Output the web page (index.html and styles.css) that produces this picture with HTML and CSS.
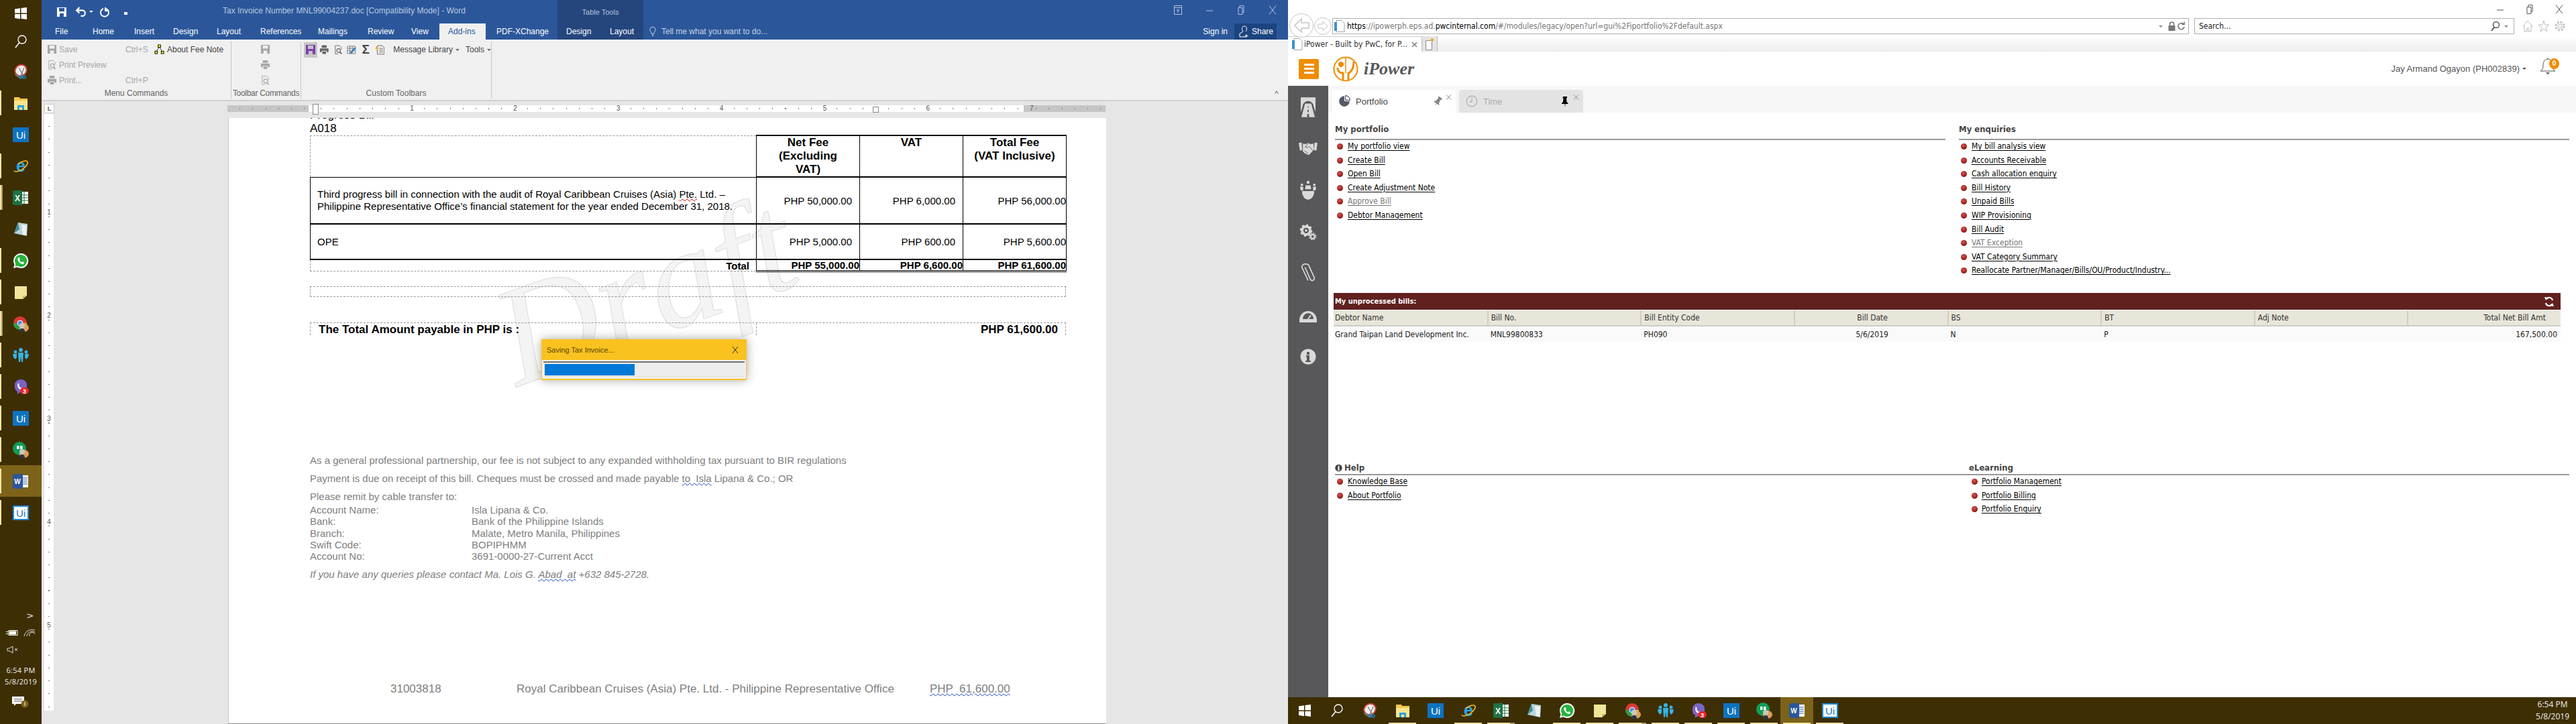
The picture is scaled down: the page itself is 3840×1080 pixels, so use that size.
FILE: index.html
```html
<!DOCTYPE html>
<html lang="en">
<head>
  <meta charset="UTF-8" />
  <title>Tax Invoice and iPower</title>
  <link rel="stylesheet" href="styles.css">
</head>
<body>

  <!-- === Icon sprite === -->
  <svg class="sprite" xmlns="http://www.w3.org/2000/svg">
    <symbol id="i-win" viewBox="0 0 24 24"><path fill="#fff" d="M3 5.500l8-1.200v7.200H3zM12.500 4.100L21 3v8.500h-8.500zM3 13h8v7.200l-8-1.200zM12.500 13H21v8l-8.500-1.200z"/></symbol>
    <symbol id="i-search" viewBox="0 0 24 24"><circle cx="14" cy="9" r="6" fill="none" stroke="#fff" stroke-width="1.300"/><path d="M10 13.500L4 21" stroke="#fff" stroke-width="1.600"/></symbol>
    <symbol id="i-snip" viewBox="0 0 24 24"><ellipse cx="12" cy="10" rx="9" ry="8" transform="rotate(-35 12 10)" fill="#eee" stroke="#c8403c" stroke-width="2"/><path d="M4 15c3 4 6 5 9 4" fill="none" stroke="#8a6a5a" stroke-width="3"/><path d="M9 6l7 12M17 6l-5 12" stroke="#555" stroke-width="1"/><circle cx="17" cy="20" r="2" fill="none" stroke="#1e88c8" stroke-width="1.500"/><circle cx="12" cy="20" r="2" fill="none" stroke="#1e88c8" stroke-width="1.500"/></symbol>
    <symbol id="i-explorer" viewBox="0 0 24 24"><path fill="#f4c74c" d="M2 3h8l1 2h11v17H2z"/><path fill="#fbe58e" d="M2 8h20v14H2z"/><path fill="#2aa3e0" d="M7 22v-7h10v7h-3v-4h-4v4z"/></symbol>
    <symbol id="i-ui" viewBox="0 0 24 24"><rect x="0" y="1" width="24" height="22" fill="#0d73c0"/></symbol>
    <symbol id="i-uio" viewBox="0 0 24 24"><rect x="1" y="2" width="22" height="20" fill="#fff" stroke="#1b87d6" stroke-width="2"/></symbol>
    <symbol id="i-ie" viewBox="0 0 24 24"><ellipse cx="12" cy="12" rx="12" ry="5" transform="rotate(-35 12 12)" fill="none" stroke="#f0c020" stroke-width="1.600" stroke-dasharray="28 12"/></symbol>
    <symbol id="i-excel" viewBox="0 0 24 24"><path fill="#fff" d="M11 3h12v18H11z"/><path stroke="#1f7245" d="M11 8h12M11 12h12M11 16h12M17 3v18"/><path fill="#1f7245" d="M0 1.500l14-1v23l-14-1z"/></symbol>
    <symbol id="i-crystal" viewBox="0 0 24 24"><path fill="#b9d4d8" d="M8 2l14 2-1 18L2 18z"/><path fill="#3f8ea0" d="M8 2l-6 16 8-6z"/><path fill="#e9f2f2" d="M13 5l8 1-1 15-5-1z"/></symbol>
    <symbol id="i-wa" viewBox="0 0 24 24"><path fill="#fff" d="M12 1a11 11 0 0 0-9.500 16.500L1 23l5.700-1.500A11 11 0 1 0 12 1z"/><path fill="#27b33f" d="M12 3a9 9 0 0 0-7.600 13.800L3.500 20.500l3.700-1A9 9 0 1 0 12 3z"/><path fill="#fff" d="M8.500 7c-1 .6-1.500 2-1 3.500 1 3 3.500 5.500 6 6.300 1.700.5 3-.3 3.500-1.500l-.3-1-2.200-1-1 1c-1.500-.5-3-2-3.600-3.500l1-1L9.600 7z"/></symbol>
    <symbol id="i-sticky" viewBox="0 0 24 24"><path fill="#f1e59a" d="M3 3h18v14l-6 5H3z"/><path fill="#c9bd6c" d="M21 17h-6v5z"/></symbol>
    <symbol id="i-chrome" viewBox="0 0 24 24"><circle cx="11" cy="11" r="10" fill="#d93a33"/><path fill="#2a9c4d" d="M1 11a10 10 0 0 0 12 9.800l-4-9z"/><path fill="#f1c030" d="M11 11h10a10 10 0 0 1-6 9z"/><circle cx="11" cy="11" r="4" fill="#4a8de8" stroke="#fff"/><use href="#i-user"/></symbol>
    <symbol id="i-user" viewBox="0 0 24 24"><ellipse cx="17" cy="18" rx="7" ry="6" fill="#d9a25a"/><circle cx="14" cy="15" r="4" fill="#cfc7bc"/><path fill="#2a3550" d="M10 24c0-4 2-5 4-5s4 1 4 5z"/></symbol>
    <symbol id="i-people" viewBox="0 0 24 24"><g fill="#36b4e6"><circle cx="12" cy="4" r="3"/><path d="M8 8h8l-1 14h-2l-1-8-1 8H9z"/><circle cx="4" cy="7" r="2.500"/><path d="M0 10h6v5l-2 3-3-3z"/><circle cx="20" cy="7" r="2.500"/><path d="M18 10h6l-1 5-3 3-2-3z"/></g></symbol>
    <symbol id="i-viber" viewBox="0 0 24 24"><path fill="#7b63c4" d="M3 9a9 8 0 0 1 18 0v4a9 8 0 0 1-10 7l-4 3v-4a8 8 0 0 1-4-6z"/><path fill="#fff" d="M8 6l2 3-1 1 3 4 1-1 3 2c-1 2-3 2-5 1-3-2-5-5-3-10z"/><rect x="11" y="13" width="13" height="10" rx="5" fill="#e8262a"/></symbol>
    <symbol id="i-hang" viewBox="0 0 24 24"><circle cx="10" cy="10" r="10" fill="#109d58"/><path fill="#fff" d="M6 6h3.500v5H6zM11 6h3.500v5H11z"/><use href="#i-user"/></symbol>
    <symbol id="i-word" viewBox="0 0 24 24"><path fill="#fff" d="M11 3h12v18H11z"/><path stroke="#2b579a" d="M13 7h9M13 10h9M13 13h9M13 16h9"/><path fill="#2b579a" d="M0 1.500l15-1v23l-15-1z"/></symbol>
    <symbol id="i-floppy" viewBox="0 0 16 16"><path fill="currentColor" fill-rule="evenodd" d="M1 1h14v14H1zM4 2v5h8V2zM5 10v5h6v-5z"/></symbol>
    <symbol id="i-print" viewBox="0 0 16 16"><path fill="currentColor" d="M4 1h8v4H4zM1 6h14v6h-3v-2H4v2H1zM5 11h6v4H5z"/></symbol>
    <symbol id="i-preview" viewBox="0 0 16 16"><path fill="none" stroke="currentColor" d="M3 1.500h7l3 3V8M3 1.500V15h5"/><circle cx="8.500" cy="9.500" r="3" fill="none" stroke="currentColor" stroke-width="1.300"/><path d="M10.500 12l3 3" stroke="currentColor" stroke-width="2"/></symbol>
    <symbol id="i-org" viewBox="0 0 16 16"><path stroke="#333" fill="none" d="M8 4L3 12M8 4l5 8"/><rect x="6" y="1" width="4" height="4" fill="#ff0" stroke="#000"/><rect x="1" y="11" width="4" height="4" fill="#ff0" stroke="#000"/><rect x="11" y="11" width="4" height="4" fill="#ff0" stroke="#000"/></symbol>
    <symbol id="i-clockpie" viewBox="0 0 16 16"><path fill="currentColor" d="M8 1a7 7 0 1 0 7 7H8z"/><path fill="none" stroke="currentColor" d="M9.500 .500a6 6 0 0 1 6 6h-6z"/></symbol>
    <symbol id="i-pin" viewBox="0 0 16 16"><path fill="currentColor" d="M5 0h6v2l-1 1 .5 5 2 2v1H3v-1l2-2 .5-5-1-1zM7.500 11h1L8 16z"/></symbol>
    <symbol id="i-tunnel" viewBox="0 0 24 32"><path fill="#d9d9d9" d="M0 0h24v24l-3-9a9 9 0 0 0-18 0L0 24z"/><path fill="#d9d9d9" d="M7 10h10l6 22H1zM11.500 14v3h1v-3zM11 20v4h2v-4zM10.500 27v5h3v-5z"/></symbol>
    <symbol id="i-hands" viewBox="0 0 32 24"><path fill="#d9d9d9" d="M0 2l5-1 1 13-4 1zM32 2l-5-1-1 13 4 1zM7 3l5 1 4-2 4 2 5-1 1 10-8 9c-2 1-3 0-3-1-2 1-3 0-3-1-2 0-3-1-3-2-1 0-2-1-2-2z"/><path stroke="#58585a" fill="none" d="M16 3l-5 6 4 1 3-2 6 7M13 17l3 3M10 15l3 3"/></symbol>
    <symbol id="i-group" viewBox="0 0 26 32"><g fill="#d9d9d9"><circle cx="13" cy="3" r="2.500"/><circle cx="3" cy="7" r="2"/><circle cx="23" cy="7" r="2"/><path d="M9 8h8l1 6h-10zM0 10h5v6H1zM21 10h5l-1 6h-4z"/><path d="M3 17h20a10 14 0 0 1-20 0z"/></g></symbol>
    <symbol id="i-gears" viewBox="0 0 32 32"><circle cx="12" cy="13" r="8" fill="none" stroke="#d9d9d9" stroke-width="5" /><circle cx="12" cy="13" r="2.500" fill="#d9d9d9"/><circle cx="12" cy="13" r="11" fill="none" stroke="#d9d9d9" stroke-width="3" stroke-dasharray="4 4.600"/><circle cx="25" cy="25" r="4" fill="#58585a" stroke="#d9d9d9" stroke-width="3"/><circle cx="25" cy="25" r="6.500" fill="none" stroke="#d9d9d9" stroke-width="2" stroke-dasharray="3 2.100"/></symbol>
    <symbol id="i-clip" viewBox="0 0 24 32"><path fill="none" stroke="#d9d9d9" stroke-width="1.800" d="M7 6l9 20a3.500 3.500 0 0 0 6-3L13 3C11 0 5 0 3 3c-1 2-1 4 0 5l9 19"/></symbol>
    <symbol id="i-dome" viewBox="0 0 28 24"><path fill="#d9d9d9" d="M1 20a13 14 0 0 1 26 0v3H1z"/><path fill="#58585a" d="M6 18a8 9 0 0 1 16 0z"/><path stroke="#d9d9d9" stroke-width="2" d="M14 18l4-6"/></symbol>
    <symbol id="i-info" viewBox="0 0 24 24"><circle cx="12" cy="12" r="11.500" fill="#d9d9d9"/><path fill="#58585a" d="M10 5h4v4h-4zM9 10h5v8h2v2H8v-2h2v-6H9z"/></symbol>
    <symbol id="i-logo" viewBox="0 0 38 38"><circle cx="19" cy="19" r="17.500" fill="none" stroke="#f08c00" stroke-width="2"/><circle cx="12" cy="12" r="4" fill="#f08c00"/><path fill="none" stroke="#f08c00" stroke-width="3" d="M7 17c0 6 4 8 8 8v11M31 8c0 10-4 16-8 17v11"/><path fill="none" stroke="#f08c00" stroke-width="1.500" d="M19 1v24"/></symbol>
  </svg>

  <div class="screen">

    <!-- === Left taskbar === -->
    <aside class="vbar">
      <div class="vitem vstart"><svg class="tb-ico"><use href="#i-win"/></svg></div>
      <div class="vitem vsearch"><svg class="tb-ico"><use href="#i-search"/></svg></div>
      <div class="vitem"><svg class="tb-ico"><use href="#i-snip"/></svg></div>
      <div class="vitem on"><svg class="tb-ico"><use href="#i-explorer"/></svg></div>
      <div class="vitem"><svg class="tb-ico" viewBox="0 0 24 24"><use href="#i-ui"/><text class="t-ui" x="12" y="18">Ui</text></svg></div>
      <div class="vitem on"><svg class="tb-ico" viewBox="0 0 24 24"><text class="t-ie" x="12" y="20">e</text><use href="#i-ie"/></svg></div>
      <div class="vitem on dbl"><svg class="tb-ico" viewBox="0 0 24 24"><use href="#i-excel"/><text class="t-xl" x="7" y="17">X</text></svg></div>
      <div class="vitem"><svg class="tb-ico"><use href="#i-crystal"/></svg></div>
      <div class="vitem on"><svg class="tb-ico"><use href="#i-wa"/></svg></div>
      <div class="vitem on"><svg class="tb-ico"><use href="#i-sticky"/></svg></div>
      <div class="vitem on dbl"><svg class="tb-ico"><use href="#i-chrome"/></svg></div>
      <div class="vitem on"><svg class="tb-ico"><use href="#i-people"/></svg></div>
      <div class="vitem on"><svg class="tb-ico" viewBox="0 0 24 24"><use href="#i-viber"/><text class="t-vb" x="17.500" y="21.500">3</text></svg></div>
      <div class="vitem on"><svg class="tb-ico" viewBox="0 0 24 24"><use href="#i-ui"/><text class="t-ui" x="12" y="18">Ui</text></svg></div>
      <div class="vitem on"><svg class="tb-ico"><use href="#i-hang"/></svg></div>
      <div class="vitem on active"><svg class="tb-ico" viewBox="0 0 24 24"><use href="#i-word"/><text class="t-wd" x="7" y="16">W</text></svg></div>
      <div class="vitem on"><svg class="tb-ico" viewBox="0 0 24 24"><use href="#i-uio"/><text class="t-uio" x="12" y="18">Ui</text></svg></div>
      <div class="vtray">
        <div class="tray-more">&gt;</div>
        <div class="tray-row">
          <svg class="tray-ico" viewBox="0 0 20 12"><path fill="none" stroke="#fff" d="M5 2.500h13v7H5z"/><path fill="#fff" d="M6 3.500h10v5H6zM1 4h4v1H1zM1 7h4v1H1z"/></svg>
          <svg class="tray-ico" viewBox="0 0 20 12"><path fill="none" stroke="#ddd" d="M2 11a12 12 0 0 1 16-9M6 11a8 8 0 0 1 12-6M10 11a4 4 0 0 1 8-3"/></svg>
        </div>
        <div class="tray-row tray-vol">
          <svg class="tray-ico" viewBox="0 0 20 12"><path fill="none" stroke="#ddd" d="M1 4h3l5-3v10L4 8H1zM12 4l4 4M16 4l-4 4"/></svg>
        </div>
        <div class="clock">6:54 PM<br>5/8/2019</div>
        <div class="notify">
          <svg class="notify-ico" viewBox="0 0 30 18"><path fill="#fff" d="M2 1h18v11H8l-3 3v-3H2z"/><path stroke="#555" d="M5 5h12M5 8h12"/><circle cx="21" cy="12" r="5.500" fill="#7d6319"/><path stroke="#fff" d="M21 9v6"/></svg>
        </div>
      </div>
    </aside>

    <!-- === Word window === -->
    <section class="word">
      <div class="w-top">
        <div class="w-title-row">
          <div class="qat">
            <svg class="qat-save"><use href="#i-floppy"/></svg>
            <svg class="qat-undo" viewBox="0 0 16 16"><path fill="none" stroke="#fff" stroke-width="2" d="M3 6h7a4 4 0 0 1 0 8H8M6 2L2 6l4 4"/></svg>
            <span class="qat-caret"></span>
            <svg class="qat-redo" viewBox="0 0 16 16"><path fill="none" stroke="#fff" stroke-width="2" d="M6 3a6 6 0 1 0 4 0M9 1v5h4"/></svg>
            <span class="qat-more"></span>
          </div>
          <div class="w-title">Tax Invoice Number MNL99004237.doc [Compatibility Mode] - Word</div>
        </div>
        <div class="tt-head">Table Tools</div>
        <div class="w-ctrls">
          <svg class="ctl" viewBox="0 0 14 14"><path fill="none" stroke="#b6c4dc" d="M1.500 .500h11v13h-11zM1.500 3.500h11M7 11V6M5 8l2-2 2 2"/></svg>
          <svg class="ctl" viewBox="0 0 14 14"><path stroke="#b6c4dc" d="M2 8h10"/></svg>
          <svg class="ctl" viewBox="0 0 14 14"><path fill="none" stroke="#b6c4dc" d="M3 3.500h6v10H3zM5 3.500v-3h6v10H9"/></svg>
          <svg class="ctl" viewBox="0 0 14 14"><path stroke="#b6c4dc" d="M2 .500l10 13M12 .500l-10 13"/></svg>
        </div>

        <nav class="w-tabs">
          <a class="file">File</a><a>Home</a><a>Insert</a><a>Design</a><a>Layout</a><a>References</a><a>Mailings</a><a>Review</a><a>View</a><a class="cur">Add-ins</a><a class="pdfx">PDF-XChange</a>
        </nav>
        <nav class="tt-tabs"><a>Design</a><a>Layout</a></nav>
        <div class="w-tabs-end">
          <svg class="bulb" viewBox="0 0 12 18"><path fill="none" stroke="#dbe3ef" d="M6 1a5 5 0 0 0-3 9l1 3h4l1-3a5 5 0 0 0-3-9zM4.500 15h3M5 17h2"/></svg>
          <span class="tell">Tell me what you want to do...</span>
          <span class="signin">Sign in</span>
          <span class="share">
            <svg class="share-ico" viewBox="0 0 16 18"><path fill="none" stroke="#fff" d="M8 1a3.500 3.500 0 0 0-3.500 4c0 2 1 3 1.500 4l-5 3v5h9M11 13v5M8.500 15.500h5M8 1a3.500 3.500 0 0 1 3.500 4c0 2-1 3-1.500 4"/></svg>Share</span>
        </div>
      </div>

      <!-- ribbon -->
      <div class="ribbon">
        <div class="rgroup g-menu">
          <div class="menu-grid">
            <svg class="r-ico"><use href="#i-floppy"/></svg><span>Save</span><span>Ctrl+S</span><svg class="r-ico"><use href="#i-org"/></svg><span class="dark">About Fee Note</span>
            <svg class="r-ico"><use href="#i-preview"/></svg><span>Print Preview</span><span></span><span></span><span></span>
            <svg class="r-ico"><use href="#i-print"/></svg><span>Print...</span><span>Ctrl+P</span><span></span><span></span>
          </div>
          <div class="rlabel">Menu Commands</div>
        </div>
        <div class="rgroup g-tool">
          <div class="tool-col">
            <svg class="r-ico"><use href="#i-floppy"/></svg>
            <svg class="r-ico"><use href="#i-print"/></svg>
            <svg class="r-ico"><use href="#i-preview"/></svg>
          </div>
          <div class="rlabel">Toolbar Commands</div>
        </div>
        <div class="rgroup g-custom">
          <div class="custom-row">
            <span class="sel"><svg class="r-ico big purple"><use href="#i-floppy"/></svg></span>
            <svg class="r-ico big gr"><use href="#i-print"/></svg>
            <svg class="r-ico big gr"><use href="#i-preview"/></svg>
            <svg class="r-ico big" viewBox="0 0 16 16"><path fill="none" stroke="#777" d="M1 2.500h13v12H1zM1 6h13M1 10h13M5 2.500v12M9 2.500v12"/><path stroke="#2a7ac0" stroke-width="2.500" d="M6 14l8-9"/></svg>
            <span class="sigma">&Sigma;</span>
            <svg class="r-ico big" viewBox="0 0 16 16"><path fill="none" stroke="#666" d="M4 1.500h8l3 3v11H4z"/><path stroke="#666" d="M7 6h6M7 9h6M7 12h6"/><path fill="#f0b030" d="M4 0L0 7h3l-1 5 4-7H4z"/></svg>
            <span class="rmenu">Message Library</span><span class="mini-caret"></span>
            <span class="rmenu tools">Tools</span><span class="mini-caret"></span>
          </div>
          <div class="rlabel">Custom Toolbars</div>
        </div>
        <div class="r-collapse">^</div>
      </div>

      <!-- ruler -->
      <div class="hruler-row">
        <div class="tab-sel">L</div>
        <div class="hruler">
          <div class="hr-gray hr-left"></div>
          <div class="hr-white"><span>1</span><span>2</span><span>3</span><span>4</span><span>5</span><span>6</span></div>
          <div class="hr-gray hr-right"><span>7</span></div>
          <i class="indent ind-l"></i><i class="indent ind-r"></i>
        </div>
      </div>

      <!-- document -->
      <div class="docarea">
        <div class="vruler"><span>1</span><span>2</span><span>3</span><span>4</span><span>5</span></div>
        <div class="page">
          <span class="draft">Draft</span>
          <div class="page-body">
            <div class="clipline">Progress Bill</div>
            <div class="aref">A018</div>
            <table class="fee">
              <colgroup><col class="c-desc"><col class="c-amt"><col class="c-amt"><col class="c-amt"></colgroup>
              <tr class="r-head">
                <td class="ghost"></td>
                <th>Net Fee<br>(Excluding<br>VAT)</th>
                <th>VAT</th>
                <th>Total Fee<br>(VAT Inclusive)</th>
              </tr>
              <tr class="r-desc">
                <td class="desc">Third progress bill in connection with the audit of Royal Caribbean Cruises (Asia) <u class="sq-red">Pte.</u> Ltd. &ndash;<br>Philippine Representative Office&rsquo;s financial statement for the year ended December 31, 2018.</td>
                <td class="num">PHP 50,000.00</td>
                <td class="num">PHP 6,000.00</td>
                <td class="num flush">PHP 56,000.00</td>
              </tr>
              <tr class="r-ope">
                <td class="desc">OPE</td>
                <td class="num">PHP 5,000.00</td>
                <td class="num">PHP 600.00</td>
                <td class="num flush">PHP 5,600.00</td>
              </tr>
              <tr class="r-total">
                <td class="ghost t-lab">Total</td>
                <td class="t-num">PHP 55,000.00</td>
                <td class="t-num">PHP 6,600.00</td>
                <td class="t-num">PHP 61,600.00</td>
              </tr>
            </table>
            <div class="emptybox"></div>
            <div class="payable">
              <div class="pay-l">The Total Amount payable in PHP is :</div>
              <div class="pay-r">PHP 61,600.00</div>
            </div>
            <div class="notes">
              <p class="n1">As a general professional partnership, our fee is not subject to any expanded withholding tax pursuant to BIR regulations</p>
              <p class="n2">Payment is due on receipt of this bill. Cheques must be crossed and made payable <u class="sq-blue">to  Isla</u> Lipana &amp; Co.; OR</p>
              <p class="n3">Please remit by cable transfer to:</p>
              <dl class="bank">
                <dt>Account Name:</dt><dd>Isla Lipana &amp; Co.</dd>
                <dt>Bank:</dt><dd>Bank of the Philippine Islands</dd>
                <dt>Branch:</dt><dd>Malate, Metro Manila, Philippines</dd>
                <dt>Swift Code:</dt><dd>BOPIPHMM</dd>
                <dt>Account No:</dt><dd>3691-0000-27-Current Acct</dd>
              </dl>
              <p class="n4"><em>If you have any queries please contact Ma. Lois G. <u class="sq-blue">Abad  at</u> +632 845-2728.</em></p>
            </div>
            <div class="pagefoot">
              <span class="pf-a">31003818</span>
              <span class="pf-b">Royal Caribbean Cruises (Asia) Pte. Ltd. - Philippine Representative Office</span>
              <u class="pf-c sq-blue">PHP  61,600.00</u>
            </div>
          </div>
        </div>
      </div>

      <!-- saving dialog -->
      <div class="saving">
        <div class="saving-head"><span>Saving Tax Invoice...</span><svg class="saving-x" viewBox="0 0 10 12"><path stroke="#333" d="M1 1l8 10M9 1L1 11"/></svg></div>
        <div class="saving-track"><div class="saving-fill"></div></div>
      </div>
    </section>

    <!-- === Right monitor === -->
    <section class="right">
      <div class="ie-chrome">
        <div class="ie-ctrls">
          <svg class="ctl" viewBox="0 0 14 14"><path stroke="#555" d="M2 8h10"/></svg>
          <svg class="ctl" viewBox="0 0 14 14"><path fill="none" stroke="#555" d="M3 3.500h6v10H3zM5 3.500v-3h6v10H9"/></svg>
          <svg class="ctl" viewBox="0 0 14 14"><path stroke="#555" d="M2 .500l10 13M12 .500l-10 13"/></svg>
        </div>
        <div class="ie-nav">
          <svg class="ie-back" viewBox="0 0 36 36"><circle cx="18" cy="18" r="17.500" fill="#fff" stroke="#c4c4c4"/><path fill="none" stroke="#c4c4c4" stroke-width="1.500" d="M18 8L8 18l10 10v-6h11v-8H18z"/></svg>
          <svg class="ie-fwd" viewBox="0 0 26 26"><circle cx="13" cy="13" r="12.500" fill="#fff" stroke="#c4c4c4"/><path fill="none" stroke="#c4c4c4" d="M13 6l7 7-7 7v-4H6v-6h7z"/></svg>
          <div class="addr">
            <svg class="pg-ico" viewBox="0 0 16 18"><path fill="#fff" stroke="#9ab" d="M3 .500h8l4 4v13H3z"/><path fill="#3c8fd0" d="M0 3h4v13H0z"/></svg>
            <span class="url"><b>https</b>://ipowerph.eps.ad.<b>pwcinternal.com</b>/#/modules/legacy/open?url=gui%2Fiportfolio%2Fdefault.aspx</span>
            <span class="mini-caret"></span>
            <svg class="lock" viewBox="0 0 10 14"><path fill="#777" d="M0 6h10v8H0z"/><path fill="none" stroke="#777" stroke-width="1.500" d="M2 6V4a3 3 0 0 1 6 0v2"/></svg>
            <svg class="lock" viewBox="0 0 12 14"><path fill="none" stroke="#666" stroke-width="1.500" d="M9.500 3.500A5 5 0 1 0 11 8M7 4h4V0"/></svg>
          </div>
          <div class="srch">
            <span>Search...</span>
            <svg class="srch-ico" viewBox="0 0 14 16"><circle cx="8" cy="6" r="4.500" fill="none" stroke="#555" stroke-width="1.500"/><path stroke="#555" stroke-width="2" d="M5 10l-4 5"/></svg>
            <span class="mini-caret"></span>
          </div>
          <div class="ie-tools">
            <svg class="t-ico" viewBox="0 0 16 18"><path fill="none" stroke="#bbb" d="M1 9l7-8 7 8h-2v8H9v-5H7v5H3V9z"/></svg>
            <svg class="t-ico" viewBox="0 0 16 18"><path fill="none" stroke="#bbb" d="M8 1l2 6h6l-5 4 2 6-5-4-5 4 2-6-5-4h6z"/></svg>
            <svg class="t-ico" viewBox="0 0 16 18"><circle cx="8" cy="9" r="3" fill="none" stroke="#bbb"/><circle cx="8" cy="9" r="6" fill="none" stroke="#bbb" stroke-width="3" stroke-dasharray="2.500 2.200"/></svg>
          </div>
        </div>
        <div class="ie-tabs">
          <div class="ie-tab">
            <svg class="pg-ico" viewBox="0 0 16 18"><path fill="#fff" stroke="#9ab" d="M3 .500h8l4 4v13H3z"/><path fill="#3c8fd0" d="M0 3h4v13H0z"/></svg>
            <span>iPower - Built by PwC, for P...</span><svg class="tab-x" viewBox="0 0 10 10"><path stroke="#777" stroke-width="1.500" d="M1 1l8 8M9 1L1 9"/></svg>
          </div>
          <div class="ie-new"><svg viewBox="0 0 12 18" class="new-ico"><path fill="#fff" stroke="#888" d="M.500 3.500h9v14h-9z"/><circle cx="10" cy="2.500" r="2.200" fill="#f3a820"/></svg></div>
        </div>
      </div>

      <header class="ip-head">
        <div class="burger"><i></i><i></i><i></i></div>
        <svg class="logo"><use href="#i-logo"/></svg>
        <span class="logo-text">iPower</span>
        <div class="ip-user">
          <span>Jay Armand Ogayon (PH002839)</span><span class="mini-caret"></span>
          <span class="bell">
            <svg viewBox="0 0 24 26" class="bell-ico"><path fill="none" stroke="#555" d="M1 20c3-2 4-4 4-9s3-9 7-9 7 4 7 9 1 7 4 9zM12 0v2"/><path fill="#555" d="M9 22h6l-3 3z"/></svg>
            <b class="badge">0</b>
          </span>
        </div>
      </header>

      <div class="ip-body">
        <aside class="rail">
          <svg class="r1"><use href="#i-tunnel"/></svg>
          <svg class="r2"><use href="#i-hands"/></svg>
          <svg class="r3"><use href="#i-group"/></svg>
          <svg class="r2"><use href="#i-gears"/></svg>
          <svg class="r3"><use href="#i-clip"/></svg>
          <svg class="r2"><use href="#i-dome"/></svg>
          <svg class="r2"><use href="#i-info"/></svg>
        </aside>
        <main class="ip-main">
          <div class="strip">
            <div class="stab cur">
              <svg class="st-ico"><use href="#i-clockpie"/></svg><span class="st-name">Portfolio</span>
              <svg class="pin tilt"><use href="#i-pin"/></svg><svg class="st-x" viewBox="0 0 10 10"><path stroke="#777" d="M1 1l8 8M9 1L1 9"/></svg>
            </div>
            <div class="stab">
              <svg class="st-ico" viewBox="0 0 16 16"><circle cx="8" cy="8" r="7" fill="none" stroke="#aaa"/><path fill="none" stroke="#aaa" d="M8 3v6H5"/></svg><span class="st-name">Time</span>
              <svg class="pin dark"><use href="#i-pin"/></svg><svg class="st-x" viewBox="0 0 10 10"><path stroke="#888" d="M1 1l8 8M9 1L1 9"/></svg>
            </div>
          </div>

          <div class="panels">
            <section class="panel">
              <h3>My portfolio</h3>
              <ul>
                <li><a>My portfolio view</a></li>
                <li><a>Create Bill</a></li>
                <li><a>Open Bill</a></li>
                <li><a>Create Adjustment Note</a></li>
                <li><a class="off">Approve Bill</a></li>
                <li><a>Debtor Management</a></li>
              </ul>
            </section>
            <section class="panel">
              <h3>My enquiries</h3>
              <ul>
                <li><a>My bill analysis view</a></li>
                <li><a>Accounts Receivable</a></li>
                <li><a>Cash allocation enquiry</a></li>
                <li><a>Bill History</a></li>
                <li><a>Unpaid Bills</a></li>
                <li><a>WIP Provisioning</a></li>
                <li><a>Bill Audit</a></li>
                <li><a class="off">VAT Exception</a></li>
                <li><a>VAT Category Summary</a></li>
                <li><a>Reallocate Partner/Manager/Bills/OU/Product/Industry...</a></li>
              </ul>
            </section>
          </div>

          <div class="bills">
            <div class="bills-bar"><span>My unprocessed bills:</span>
              <svg class="refresh" viewBox="0 0 14 16"><path fill="none" stroke="#fff" stroke-width="2.200" d="M12 6a5 5 0 0 0-9-2M2 10a5 5 0 0 0 9 2"/><path fill="#fff" d="M0 1l6 1-4 4zM14 15l-6-1 4-4z"/></svg>
            </div>
            <div class="bills-grid b-head">
              <div>Debtor Name</div><div>Bill No.</div><div>Bill Entity Code</div><div class="ctr">Bill Date</div><div>BS</div><div>BT</div><div>Adj Note</div><div class="rgt">Total Net Bill Amt</div>
            </div>
            <div class="bills-grid b-row">
              <div>Grand Taipan Land Development Inc.</div><div>MNL99800833</div><div>PH090</div><div class="ctr">5/6/2019</div><div>N</div><div>P</div><div></div><div class="rgt">167,500.00</div>
            </div>
          </div>

          <div class="helps">
            <section class="panel">
              <h3 class="h-help"><svg class="help-i" viewBox="0 0 24 24"><circle cx="12" cy="12" r="11.500" fill="#444"/><path fill="#fff" d="M10 5h4v4h-4zM9 10h5v8h2v2H8v-2h2v-6H9z"/></svg>Help</h3>
              <ul>
                <li><a>Knowledge Base</a></li>
                <li><a>About Portfolio</a></li>
              </ul>
            </section>
            <section class="panel elearn">
              <h3>eLearning</h3>
              <ul>
                <li><a>Portfolio Management</a></li>
                <li><a>Portfolio Billing</a></li>
                <li><a>Portfolio Enquiry</a></li>
              </ul>
            </section>
          </div>
        </main>
      </div>

      <!-- === Bottom taskbar === -->
      <footer class="hbar">
        <div class="hitem hstart"><svg class="tb-ico"><use href="#i-win"/></svg></div>
        <div class="hitem"><svg class="tb-ico"><use href="#i-search"/></svg></div>
        <div class="hitem"><svg class="tb-ico"><use href="#i-snip"/></svg></div>
        <div class="hitem on"><svg class="tb-ico"><use href="#i-explorer"/></svg></div>
        <div class="hitem"><svg class="tb-ico" viewBox="0 0 24 24"><use href="#i-ui"/><text class="t-ui" x="12" y="18">Ui</text></svg></div>
        <div class="hitem on"><svg class="tb-ico" viewBox="0 0 24 24"><text class="t-ie" x="12" y="20">e</text><use href="#i-ie"/></svg></div>
        <div class="hitem on dbl"><svg class="tb-ico" viewBox="0 0 24 24"><use href="#i-excel"/><text class="t-xl" x="7" y="17">X</text></svg></div>
        <div class="hitem"><svg class="tb-ico"><use href="#i-crystal"/></svg></div>
        <div class="hitem on"><svg class="tb-ico"><use href="#i-wa"/></svg></div>
        <div class="hitem on"><svg class="tb-ico"><use href="#i-sticky"/></svg></div>
        <div class="hitem on dbl"><svg class="tb-ico"><use href="#i-chrome"/></svg></div>
        <div class="hitem on"><svg class="tb-ico"><use href="#i-people"/></svg></div>
        <div class="hitem on"><svg class="tb-ico" viewBox="0 0 24 24"><use href="#i-viber"/><text class="t-vb" x="17.500" y="21.500">3</text></svg></div>
        <div class="hitem on"><svg class="tb-ico" viewBox="0 0 24 24"><use href="#i-ui"/><text class="t-ui" x="12" y="18">Ui</text></svg></div>
        <div class="hitem on"><svg class="tb-ico"><use href="#i-hang"/></svg></div>
        <div class="hitem on active"><svg class="tb-ico" viewBox="0 0 24 24"><use href="#i-word"/><text class="t-wd" x="7" y="16">W</text></svg></div>
        <div class="hitem on"><svg class="tb-ico" viewBox="0 0 24 24"><use href="#i-uio"/><text class="t-uio" x="12" y="18">Ui</text></svg></div>
        <div class="hclock">6:54 PM<br>5/8/2019</div>
      </footer>
    </section>
  </div>

</body>
</html>
```

FILE: styles.css
```css
body {
  margin: 0;
  overflow: hidden;
  background: #fff;
  font-family: "Liberation Sans", sans-serif;
  color: #000;
}

.sprite {
  position: absolute;
  width: 0;
  height: 0;
}

.screen {
  display: flex;
  width: 3840px;
  height: 1080px;
  overflow: hidden;
}

/* === Taskbars === */
.vbar {
  width: 62px;
  height: 1080px;
  flex: none;
  background: #3e2e03;
  display: flex;
  flex-direction: column;
  position: relative;
}

.vitem {
  height: 47px;
  flex: none;
  display: flex;
  align-items: center;
  justify-content: center;
  position: relative;
}

.vstart { height: 40px; }
.vsearch { height: 43px; }

.tb-ico {
  width: 24px;
  height: 24px;
}

/* letters on the app tiles */
.t-ui, .t-uio, .t-ie, .t-xl, .t-vb, .t-wd {
  font-family: "Liberation Sans", sans-serif;
  text-anchor: middle;
}

.t-ui { font-size: 15px; fill: #fff; }
.t-uio { font-size: 15px; fill: #1b72bc; }
.t-ie { font-size: 25px; font-weight: bold; fill: #26a6e6; }
.t-xl { font-size: 12px; font-weight: bold; fill: #fff; }
.t-vb { font-size: 9px; font-weight: bold; fill: #fff; }
.t-wd { font-size: 10px; font-weight: bold; fill: #fff; }

.vitem.on::before {
  content: "";
  position: absolute;
  left: 0;
  top: 5px;
  bottom: 5px;
  width: 2px;
  background: #f6e49f;
}

.vitem.dbl::before {
  width: 4px;
  background: linear-gradient(90deg, #f6e49f 0 2px, #a99a6c 2px 4px);
}

.vitem.active {
  background: #7d6319;
}

.vtray {
  margin-top: auto;
  color: #eee;
  display: flex;
  flex-direction: column;
  align-items: center;
  padding-bottom: 20px;
}

.tray-more {
  font-size: 13px;
  margin-left: 28px;
  height: 20px;
  transform: scaleX(1.300);
}

.tray-row {
  display: flex;
  gap: 6px;
  height: 25px;
  align-items: center;
}

.tray-vol { margin-right: 22px; }

.tray-ico {
  width: 20px;
  height: 12px;
}

.clock {
  margin-top: 10px;
  text-align: center;
  font-size: 11px;
  line-height: 17px;
  letter-spacing: .3px;
  font-family: "Open Sans", sans-serif;
  white-space: nowrap;
}

.notify { margin-top: 13px; }

.notify-ico {
  width: 30px;
  height: 18px;
}

.hbar {
  position: relative;
  height: 40px;
  flex: none;
  background: #3e2e03;
  display: flex;
}

.hitem {
  width: 49px;
  flex: none;
  display: flex;
  align-items: center;
  justify-content: center;
  position: relative;
}

.hstart { margin-right: -1px; }

.hitem.on::after {
  content: "";
  position: absolute;
  left: 4px;
  right: 4px;
  bottom: 0;
  height: 2px;
  background: #f6e49f;
}

.hitem.dbl::after {
  background: linear-gradient(90deg, #f6e49f 0 34px, #a99a6c 34px);
}

.hitem.active {
  background: #7d6319;
}

.hclock {
  margin-left: auto;
  margin-right: 10px;
  color: #eee;
  font-size: 12px;
  line-height: 18px;
  padding-top: 2px;
  text-align: center;
  font-family: "Open Sans", sans-serif;
}

/* === Word window === */
.word {
  width: 1858px;
  flex: none;
  position: relative;
  background: #e6e6e6;
  display: flex;
  flex-direction: column;
}

.w-top {
  display: grid;
  grid-template-columns: 769px 128px 1fr;
  grid-template-rows: 35px 24px;
  background: #2b579a;
  color: #fff;
  font-size: 12px;
}

.w-title-row {
  display: flex;
  align-items: center;
}

.qat {
  width: 270px;
  flex: none;
  display: flex;
  align-items: center;
  padding-left: 22px;
  box-sizing: border-box;
  height: 30px;
}

.qat svg { color: #fff; }

.qat-save { width: 16px; height: 16px; margin-right: 12px; }
.qat-undo { width: 17px; height: 17px; }
.qat-redo { width: 16px; height: 16px; margin-left: 9px; }

.qat-caret,
.mini-caret {
  display: inline-block;
  width: 0;
  height: 0;
  border-left: 3px solid transparent;
  border-right: 3px solid transparent;
  border-top: 3px solid #fff;
}

.qat-caret { margin-left: 4px; }

.qat-more {
  width: 5px;
  height: 4px;
  margin-left: 21px;
  margin-top: 5px;
  border-top: 1px solid #fff;
  border-bottom: 3px solid #fff;
  box-sizing: border-box;
}

.w-title {
  color: #b9c8e0;
  white-space: nowrap;
  padding-bottom: 4px;
}

.tt-head {
  background: #24467d;
  color: #b6c4dc;
  text-align: center;
  line-height: 36px;
  font-size: 11px;
}

.w-ctrls {
  display: flex;
  justify-content: flex-end;
  align-items: flex-start;
  gap: 33px;
  padding: 8px 16px 0 0;
}

.ctl {
  width: 14px;
  height: 14px;
}

.w-tabs {
  display: grid;
  grid-template-columns: 56px 62px 58px 65px 65px 86px 74px 65px 42px 69px 107px;
  padding-left: 20px;
  line-height: 24px;
}

.w-tabs a.cur {
  background: #f0f0f0;
  color: #2b579a;
  padding-left: 13px;
}

.w-tabs a.pdfx { padding-left: 16px; }

.tt-tabs {
  display: grid;
  grid-template-columns: 65px 63px;
  background: #24467d;
  line-height: 24px;
}

.tt-tabs a { padding-left: 13px; }

.w-tabs-end {
  display: flex;
  align-items: center;
  padding-left: 9px;
  padding-right: 17px;
}

.bulb { width: 10px; height: 18px; margin-right: 8px; }

.tell { color: #c5d1e4; }

.signin { margin-left: auto; margin-right: 10px; }

.share {
  display: flex;
  align-items: center;
  gap: 3px;
  height: 24px;
  width: 63px;
  box-sizing: border-box;
  padding-left: 7px;
  background: #1c4480;
}

.share-ico { width: 16px; height: 18px; }

/* ribbon */
.ribbon {
  height: 92px;
  flex: none;
  background: #f0f0f0;
  border-bottom: 2px solid #d0d0d0;
  box-sizing: border-box;
  display: flex;
  padding-top: 3px;
  position: relative;
  font-size: 12px;
  color: #a6a6a6;
}

.rgroup {
  box-sizing: border-box;
  height: 85px;
  border-right: 1px solid #c6c6c6;
  display: flex;
  flex-direction: column;
}

.g-menu { width: 283px; }
.g-tool { width: 104px; }
.g-custom { width: 284px; }

.menu-grid {
  display: grid;
  grid-template-columns: 18px 99px 43px 19px auto;
  grid-auto-rows: 23px;
  align-items: center;
  padding-left: 8px;
  height: 69px;
}

.r-ico {
  width: 15px;
  height: 15px;
  color: #a6a6a6;
}

.dark { color: #444; }

.rlabel {
  text-align: center;
  line-height: 16px;
  margin-top: auto;
  color: #666;
  font-size: 12px;
  white-space: nowrap;
}

.g-tool .rlabel { letter-spacing: -.3px; }

.tool-col {
  display: flex;
  flex-direction: column;
  align-items: center;
  height: 69px;
  justify-content: space-around;
  margin-left: -2px;
}

.custom-row {
  height: 24px;
  display: flex;
  align-items: center;
  gap: 6px;
  padding-left: 4px;
  color: #444;
  white-space: nowrap;
}

.sel {
  background: #c6c6c6;
  width: 22px;
  height: 23px;
  margin-right: -3px;
  display: flex;
  align-items: center;
  justify-content: center;
}

.r-ico.big { width: 16px; height: 16px; }
.r-ico.purple { color: #7a3fa8; }
.r-ico.gr { color: #666; }

.sigma {
  font-size: 19px;
  font-weight: bold;
  width: 16px;
  text-align: center;
  color: #444;
}

.rmenu { margin-left: 7px; }
.rmenu.tools { margin-left: 3px; }

.custom-row .mini-caret {
  border-top-color: #666;
  margin-left: -2px;
}

.r-collapse {
  position: absolute;
  left: 1838px;
  top: 74px;
  font-size: 12px;
  color: #666;
}

/* rulers */
.hruler-row {
  height: 19px;
  flex: none;
  position: relative;
  display: flex;
}

.tab-sel {
  width: 15px;
  height: 14px;
  margin: 4px 0 0 4px;
  background: #fff;
  border: 1px solid #ccc;
  box-sizing: border-box;
  font-size: 9px;
  font-weight: bold;
  text-align: center;
  line-height: 13px;
  color: #555;
}

.hruler {
  position: relative;
  margin: 6px 0 0 258px;
  height: 10px;
  display: flex;
  font-size: 10px;
  line-height: 10px;
  color: #555;
}

.hr-gray {
  background-color: #c6c6c6;
  background-image: repeating-linear-gradient(90deg, transparent 0 18.200px, #777 18.200px 19.230px);
  background-size: 100% 2px;
  background-position: 0 4px;
  background-repeat: no-repeat;
}

.hr-left { width: 121px; }

.hr-right {
  width: 122px;
  padding-left: 9px;
  box-sizing: border-box;
}

.hr-white {
  width: 1066px;
  background-color: #fff;
  background-image: repeating-linear-gradient(90deg, transparent 0 18.200px, #777 18.200px 19.230px);
  background-size: 100% 2px;
  background-position: 0 4px;
  background-repeat: no-repeat;
  display: flex;
}

.hr-white span {
  width: 153.850px;
  flex: none;
  text-align: right;
  transform: translateX(3px);
  background: linear-gradient(#fff, #fff) no-repeat right 0 / 8px 10px;
}

.indent {
  position: absolute;
  background: #fff;
  border: 1px solid #888;
  width: 7px;
  height: 7px;
  top: 2px;
}

.ind-l { left: 127px; height: 14px; top: -2px; }
.ind-r { left: 962px; }

/* document */
.docarea {
  flex: 1;
  display: flex;
  min-height: 0;
  position: relative;
}

.vruler {
  width: 14px;
  height: 890px;
  flex: none;
  margin: 0 0 0 4px;
  background-color: #fff;
  background-image: repeating-linear-gradient(180deg, transparent 0 18.200px, #777 18.200px 19.230px);
  background-size: 2px 100%;
  background-position: 6px 0;
  background-repeat: no-repeat;
  display: flex;
  flex-direction: column;
  font-size: 10px;
  color: #555;
  text-align: center;
  line-height: 14px;
}

.vruler span {
  display: flex;
  flex: none;
  height: 154px;
  align-items: flex-end;
  justify-content: center;
}

.page {
  width: 1309px;
  margin: 6px 0 0 260px;
  flex: none;
  height: 904px;
  box-sizing: border-box;
  background: #fff;
  border-left: 1px solid #c6c6c6;
  border-bottom: 1px solid #8a8a8a;
  position: relative;
  overflow: hidden;
}

.draft {
  position: absolute;
  left: 430px;
  top: 225px;
  font-family: "Liberation Serif", serif;
  font-style: italic;
  font-size: 210px;
  line-height: 210px;
  color: #f4f4f4;
  -webkit-text-stroke: 1px #dcdcdc;
  transform-origin: 0 176px;
  transform: rotate(-20deg);
}

.page-body {
  position: relative;
  padding-left: 121px;
  font-size: 15px;
}

.clipline {
  font-size: 17px;
  line-height: 20px;
  margin-top: -14px;
}

.aref {
  font-size: 17px;
  line-height: 20px;
  margin-bottom: -1px;
}

.fee {
  border-collapse: collapse;
  table-layout: fixed;
  width: 1127px;
}

.c-desc { width: 665px; }
.c-amt { width: 154px; }

.fee td, .fee th {
  padding: 0;
  border: 1px solid #000;
}

.fee td.ghost {
  border: 1px dashed #999;
  border-right: 1px solid #000;
}

.fee th {
  font-size: 17px;
  line-height: 20px;
  vertical-align: top;
  font-weight: bold;
  border-top-width: 2px;
  border-bottom-width: 2px;
}

.r-head { height: 60px; }
.r-desc { height: 70px; }
.r-ope { height: 53px; }
.r-total { height: 17px; }

.fee .desc {
  padding-left: 10px;
  line-height: 18px;
  border-bottom-width: 2px;
}

.fee .num {
  text-align: right;
  padding-right: 11px;
  border-bottom-width: 2px;
}

.fee .num.flush { padding-right: 0; }

.fee td.t-lab {
  font-weight: bold;
  text-align: right;
  padding-right: 10px;
  line-height: 15px;
  border-bottom: 1px dashed #999;
}

.fee td.t-num {
  font-weight: bold;
  text-align: right;
  line-height: 15px;
  border-bottom: 3px double #000;
  white-space: nowrap;
}

.emptybox {
  width: 1127px;
  height: 16px;
  margin-top: 21px;
  border: 1px dashed #999;
  box-sizing: border-box;
}

.payable {
  width: 1127px;
  height: 19px;
  margin-top: 38px;
  display: flex;
  box-sizing: border-box;
  border: 1px dashed #999;
  border-bottom: 0;
  font-size: 17px;
  font-weight: bold;
  line-height: 19px;
}

.pay-l {
  width: 665px;
  box-sizing: border-box;
  padding-left: 12px;
  border-right: 1px dashed #999;
}

.pay-r {
  flex: 1;
  text-align: right;
  padding-right: 11px;
}

.notes {
  color: #808080;
  margin-top: 178px;
}

.notes p {
  margin: 0;
  line-height: 18px;
  white-space: pre-wrap;
}

.notes .n2, .notes .n3 { margin-top: 9px; }
.notes .n4 { margin-top: 10px; }

.bank {
  margin: 2px 0 0;
  display: grid;
  grid-template-columns: 241px auto;
  grid-auto-rows: 17.250px;
  line-height: 17.250px;
}

.bank dt, .bank dd { margin: 0; }

.sq-red {
  text-decoration: underline wavy #d00;
  text-decoration-thickness: 1px;
}

.sq-blue {
  text-decoration: underline wavy #1c3fc8;
  text-decoration-thickness: 1px;
  white-space: pre;
}

.pagefoot {
  margin-top: 152px;
  margin-left: 120px;
  font-size: 17px;
  line-height: 20px;
  color: #808080;
  display: flex;
  white-space: nowrap;
}

.pf-a { width: 188px; flex: none; }
.pf-b { width: 616px; flex: none; }

/* saving dialog */
.saving {
  position: absolute;
  left: 745px;
  top: 506px;
  width: 306px;
  height: 61px;
  box-sizing: border-box;
  background: #f0f0f0;
  border: 1px solid #f9c21f;
  border-bottom-width: 2px;
  box-shadow: 0 0 14px rgba(0, 0, 0, .35);
}

.saving-head {
  height: 30px;
  background: #f9c21f;
  display: flex;
  align-items: center;
  justify-content: space-between;
  padding: 0 11px 0 7px;
  font-size: 11px;
  color: #5a4400;
}

.saving-x { width: 10px; height: 12px; }

.saving-track {
  margin: 2px 2px 0;
  height: 23px;
  box-sizing: border-box;
  border-top: 2px solid #707070;
  border-bottom: 1px solid #ddd;
  padding: 2px;
  background: #ededed;
}

.saving-fill {
  width: 134px;
  height: 17px;
  background: #0078d7;
}

/* === Browser === */
.right {
  width: 1920px;
  flex: none;
  display: flex;
  flex-direction: column;
  background: #fff;
}

.ie-chrome {
  height: 77px;
  flex: none;
  font-family: "DejaVu Sans", sans-serif;
  font-stretch: condensed;
  font-size: 12px;
}

.ie-ctrls {
  height: 27px;
  box-sizing: border-box;
  display: flex;
  justify-content: flex-end;
  gap: 30px;
  padding: 7px 18px 0 0;
}

.ie-nav {
  height: 27px;
  display: flex;
  align-items: flex-start;
  position: relative;
  padding-left: 2px;
}

.ie-back {
  width: 36px;
  height: 36px;
  margin-top: -7px;
  flex: none;
  position: relative;
}

.ie-fwd {
  width: 26px;
  height: 26px;
  margin: -1px 0 0 1px;
  flex: none;
}

.addr, .srch {
  height: 24px;
  box-sizing: border-box;
  border: 1px solid #b0b0b0;
  display: flex;
  align-items: center;
  background: #fff;
}

.addr {
  width: 1277px;
  margin-left: 1px;
  padding: 0 5px 0 2px;
  gap: 3px;
  color: #777;
  flex: none;
}

.url b { font-weight: normal; color: #000; }
.url { flex: 1; white-space: nowrap; }
.addr .mini-caret { border-top-color: #888; margin-right: 5px; }

.pg-ico { width: 16px; height: 18px; flex: none; }

.lock { width: 11px; height: 14px; }

.srch {
  width: 477px;
  margin-left: 8px;
  padding: 0 8px 0 6px;
  color: #222;
  flex: none;
}

.srch-ico { width: 14px; height: 16px; margin-left: auto; margin-right: 6px; }
.srch .mini-caret { border-top-color: #888; }

.ie-tools {
  display: flex;
  gap: 8px;
  margin-left: 12px;
  margin-top: 3px;
}

.t-ico { width: 16px; height: 18px; }

.ie-tabs {
  height: 23px;
  display: flex;
  background: linear-gradient(#fff, #ececec);
}

.ie-tab {
  width: 200px;
  box-sizing: border-box;
  background: #fff;
  border-right: 1px solid #bbb;
  border-top: 1px solid #ccc;
  display: flex;
  align-items: center;
  padding-left: 6px;
  gap: 2px;
  color: #333;
  white-space: nowrap;
}

.tab-x { width: 9px; height: 9px; margin-left: 4px; flex: none; }

.ie-new {
  width: 22px;
  border-right: 1px solid #bbb;
  display: flex;
  align-items: center;
  justify-content: center;
  background: #e4e4e4;
}

.new-ico { width: 12px; height: 18px; }

.ip-head {
  height: 51px;
  flex: none;
  display: flex;
  align-items: center;
  position: relative;
  padding-left: 16px;
}

.burger {
  width: 30px;
  height: 30px;
  border-radius: 2px;
  background: #f08c00;
  display: flex;
  flex-direction: column;
  justify-content: center;
  align-items: center;
  gap: 3px;
}

.burger i {
  width: 15px;
  height: 3px;
  background: #fff;
}

.logo {
  width: 38px;
  height: 38px;
  margin-left: 21px;
}

.logo-text {
  font-family: "Liberation Serif", serif;
  font-style: italic;
  font-weight: bold;
  font-size: 26px;
  color: #58585a;
  margin-left: 8px;
}

.ip-user {
  margin-left: auto;
  display: flex;
  align-items: center;
  gap: 4px;
  padding-right: 30px;
  color: #555;
  font-size: 13px;
}

.ip-user .mini-caret { border-top-color: #555; }

.bell {
  position: relative;
  width: 24px;
  height: 26px;
  margin-left: 16px;
  margin-bottom: 8px;
}

.bell-ico { width: 24px; height: 26px; }

.badge {
  position: absolute;
  left: 14px;
  top: 1px;
  width: 15px;
  height: 16px;
  border-radius: 50%;
  background: #f08c00;
  color: #fff;
  font-size: 10px;
  text-align: center;
  line-height: 16px;
}

.ip-body {
  flex: 1;
  display: flex;
  min-height: 0;
}

.rail {
  width: 60px;
  flex: none;
  background: #58585a;
  display: grid;
  grid-auto-rows: 62px;
  justify-items: center;
  align-items: center;
  align-content: start;
  padding-top: 1px;
  box-sizing: border-box;
}

.r1 { width: 22px; height: 30px; }
.r2 { width: 28px; height: 24px; }
.r3 { width: 24px; height: 30px; }

.ip-main {
  flex: 1;
  min-width: 0;
  font-family: "DejaVu Sans", sans-serif;
  font-stretch: condensed;
  font-size: 12px;
}

.strip {
  height: 40px;
  background: #f7f7f7;
  display: flex;
  gap: 5px;
  align-items: flex-end;
  padding-left: 5px;
}

.stab {
  width: 185px;
  height: 34px;
  box-sizing: border-box;
  background: #e3e3e3;
  border-radius: 4px 4px 0 0;
  display: flex;
  align-items: center;
  padding-left: 10px;
  color: #aaa;
  font-family: "Liberation Sans", sans-serif;
  font-size: 13px;
  position: relative;
}

.stab.cur {
  background: #fff;
  color: #444;
}

.st-ico {
  width: 18px;
  height: 18px;
  color: #555a66;
  margin-right: 8px;
}

.pin {
  width: 16px;
  height: 20px;
  position: absolute;
  left: 150px;
  top: 8px;
  color: #888;
}

.pin.tilt { transform: rotate(35deg); }
.pin.dark { color: #000; }

.st-x {
  width: 9px;
  height: 10px;
  position: absolute;
  right: 6px;
  top: 6px;
}

.panels {
  display: grid;
  grid-template-columns: 910px 910px;
  gap: 20px;
  padding-left: 10px;
  height: 269px;
}

.panel h3 {
  margin: 0;
  height: 41px;
  box-sizing: border-box;
  padding-top: 16px;
  line-height: 18px;
  font-size: 13px;
  color: #444;
  font-weight: bold;
  border-bottom: 2px solid #999;
}

.panel ul {
  list-style: none;
  margin: -1px 0 0;
  padding: 0 0 0 2px;
}

.panel li {
  height: 20.600px;
  line-height: 20.600px;
  padding-left: 17px;
  position: relative;
  color: #000;
}

.panel li::before {
  content: "";
  position: absolute;
  left: 1px;
  top: 6px;
  width: 9px;
  height: 9px;
  border-radius: 50%;
  background: radial-gradient(circle at 40% 35%, #d9534f, #8a1414 75%);
}

.panel li a {
  text-decoration: underline;
  text-underline-offset: 2px;
}

.panel li a.off { color: #777; }

.bills {
  margin-left: 8px;
  width: 1829px;
}

.bills-bar {
  height: 25px;
  background: #60211f;
  color: #fff;
  font-weight: bold;
  font-size: 11px;
  display: flex;
  align-items: center;
  justify-content: space-between;
  padding: 0 10px 0 2px;
}

.refresh { width: 14px; height: 16px; }

.bills-grid {
  display: grid;
  grid-template-columns: repeat(8, 1fr);
  align-items: center;
}

.b-head {
  height: 24px;
  margin-top: 1px;
  background: #e8e6d9;
  border-bottom: 2px solid #ccc;
  box-sizing: border-box;
  color: #333;
}

.b-head > div {
  line-height: 22px;
  border-left: 2px solid #d0cebf;
  padding-left: 4px;
}

.b-head > div:first-child { border-left: 0; padding-left: 2px; }

.b-row {
  height: 23px;
  background: #fafafa;
  color: #222;
}

.b-row > div { padding-left: 5px; }
.b-row > div:first-child { padding-left: 2px; }

.b-head > .rgt { text-align: right; padding-right: 22px; }
.b-row > .rgt { text-align: right; padding-right: 5px; }

.bills-grid > .ctr { text-align: center; }

.helps {
  margin: 163px 10px 0;
  display: grid;
  grid-template-columns: 945px 1fr;
}

.helps h3 {
  height: 36px;
  padding-top: 16px;
}

.h-help {
  display: flex;
  gap: 3px;
  align-items: center;
}

.help-i { width: 11px; height: 12px; }

/* eLearning list sits a little further in */
.elearn ul { padding-left: 3px; }
.elearn li { padding-left: 16px; }
```
